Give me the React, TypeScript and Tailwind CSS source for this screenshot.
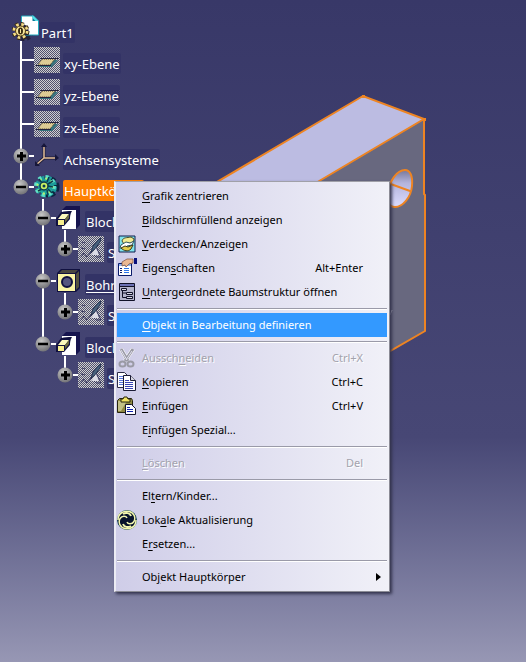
import React from "react";

interface TreeNode {
    label: string;
    icon: React.ReactNode;
    toggle?: "plus" | "minus";
    selected?: boolean;
    underlined?: boolean;
    children?: TreeNode[];
}

interface IMenuEntry {
    before: string;
    hotkey?: string;
    after?: string;
    shortcut?: string;
    icon?: React.ReactNode;
    state?: "active" | "disabled";
    submenu?: boolean;
}

/* Tree icons */

function PartIcon() {
    return (
        <svg viewBox="0 0 27 28" className="-mt-0.5 h-7 w-7">
            <circle cx="12" cy="18" r="7" fill="#25213a" stroke="#25213a" strokeWidth="4" strokeDasharray="3 2.5" />
            <path d="M9 2h12l5 5v14H9z" fill="#fff" stroke="#25a9bd" />
            <path d="M20 1v6h6z" fill="#0b7b96" />
            <path d="M20 1l6 6h-3l-3-3z" fill="#4fe0ea" />
            <path d="M10 10c5 1 7 5 6 11h-6z" fill="#25213a" />
            <circle cx="8" cy="17" r="7" fill="none" stroke="#3a2c12" strokeWidth="4" strokeDasharray="3 2.5" />
            <circle cx="8" cy="17" r="6.5" fill="none" stroke="#f3dc8a" strokeWidth="3" strokeDasharray="2.6 2.5" />
            <circle cx="8" cy="17" r="5" fill="#f6e49a" stroke="#5a4310" />
            <ellipse cx="8" cy="17" rx="2.5" ry="3.5" fill="#3a2c12" />
            <path d="M8 15v4" stroke="#f6e49a" />
        </svg>
    );
}

function Dither({ id }: { id: string }) {
    return (
        <>
            <defs>
                <pattern id={id} width="2" height="2" patternUnits="userSpaceOnUse">
                    <rect width="2" height="2" fill="#50506e" />
                    <path d="M0 0h1v1H0zM1 1h1v1H1z" fill="#cfcfcf" />
                </pattern>
            </defs>
            <rect width="26" height="26" fill={`url(#${id})`} shapeRendering="crispEdges" />
        </>
    );
}

function PlaneIcon() {
    return (
        <svg viewBox="0 0 26 26" className="size-[26px]">
            <Dither id="plane" />
            <path d="M11 13h13l-6 7H5z" fill="#35727c" />
            <path d="M8 12h13l-5 6H4z" fill="#dccb94" stroke="#3b3420" strokeDasharray="1 1" />
            <path d="M6 11.5h19M2 18.5h15" stroke="#22223c" />
        </svg>
    );
}

function AxisIcon() {
    return (
        <svg viewBox="0 0 26 26" className="size-[26px]">
            <path d="M10 2v13h13M10 15l-8 7" fill="none" stroke="#1d1d38" strokeWidth="3" />
            <path d="M10 3v12h12M10 15l-7 6" fill="none" stroke="#e3bd97" strokeWidth="1.5" />
            <path d="M7 4l3-4 3 4zM21 11l4 4-4 3zM1 18v5h5z" fill="#16163a" />
        </svg>
    );
}

function BodyIcon() {
    return (
        <svg viewBox="0 0 26 26" className="size-[26px]">
            <circle cx="15" cy="13" r="8" fill="#0d2440" stroke="#0d2440" strokeWidth="5" strokeDasharray="4 2.6" />
            <circle cx="12" cy="12.5" r="8" fill="#22a79b" stroke="#1b9a9a" strokeWidth="6" strokeDasharray="4.5 1.8" />
            <circle cx="11" cy="12" r="9" fill="none" stroke="#5fe0c8" strokeWidth="4" strokeDasharray="3 4.1" />
            <circle cx="11" cy="12" r="7.5" fill="none" stroke="#b4f26a" strokeWidth="2" strokeDasharray="2 3.9" />
            <path d="M5 5l3 4M15 3l-2 5M4 17l4-2M14 21l-1-5M19 13l-5-1M19 7l-5 3M18 19l-4-4" stroke="#0c3b50" strokeWidth="1.5" />
            <circle cx="10" cy="12" r="4" fill="#c8f062" stroke="#0c3b50" strokeWidth="1.5" />
            <circle cx="10" cy="12" r="1.5" fill="#0c3b50" />
        </svg>
    );
}

function PadIcon() {
    return (
        <svg viewBox="0 0 26 26" className="size-[26px]">
            <path d="M6 5l4-4h14v19l-4 4z" fill="#16144f" />
            <path d="M6 5h14v19H6z" fill="#fff" />
            <path d="M0 14l5-7h1c2-1 6-1 10-1-2 3-2 6-2 8l-6 7H0z" fill="#111140" />
            <path d="M6 9h7l-4 5H2z" fill="#fcf9bd" />
            <path d="M2 15h6v5H2z" fill="#f8f08f" />
            <path d="M13 9v4l-4 5v-4z" fill="#6b6940" />
        </svg>
    );
}

function HoleIcon() {
    return (
        <svg viewBox="0 0 26 26" className="size-[26px]">
            <path d="M1 5l4-4h19v19l-4 4H1z" fill="#111140" />
            <path d="M6 2h16l-3 3H3z" fill="#4a4740" />
            <path d="M20 6l3-3v16l-3 3z" fill="#55523e" />
            <path d="M2 6h17v17H2z" fill="#fbf5a4" />
            <circle cx="11" cy="14" r="5" fill="#55557f" stroke="#111140" strokeWidth="2" />
        </svg>
    );
}

function SketchIcon() {
    return (
        <svg viewBox="0 0 26 26" className="size-[26px]">
            <Dither id="sketch" />
            <path d="M3 21l3-4 3 4 4-5 5 5h5l-5-10" fill="none" stroke="#34345e" />
            <path d="M4 6l3 1M3 12l4 1" stroke="#34345e" />
            <path d="M13 16l2-6 6-7 2-1-1 4-5 7z" fill="#47617c" stroke="#23304e" />
            <path d="M18 12l3 7h-8l3-4z" fill="#dcdce6" />
        </svg>
    );
}

/* Menu icons */

function HideShowIcon() {
    return (
        <svg viewBox="0 0 20 20" className="size-5">
            <path d="M2 2h16v16H2z" fill="#7fe3ec" stroke="#101d4c" />
            <path d="M5 7c1-4 5-3 9-4l3 2c0 3-3 5-6 4l-4 1z" fill="#f3ec92" stroke="#4c4c2a" />
            <path d="M4 11l5-3 4 1 4-2-2 4-5 1-3 3-4-1z" fill="#fff" stroke="#31565e" />
            <path d="M4 14l4-2 3 1 5-2-2 4c-3 3-7 2-10-1z" fill="#e2cc4b" stroke="#3c3616" />
        </svg>
    );
}

function PropertiesIcon() {
    return (
        <svg viewBox="0 0 20 20" className="size-5">
            <path d="M1.5 5.5h13v12h-13z" fill="#fff" stroke="#0b1c6b" />
            <path d="M2 6h12v2H2z" fill="#8fb2f0" />
            <path d="M3 10.5h2M3 12.5h2M3 14.5h2" stroke="#0b1c6b" />
            <path d="M7 10.5h5M7 12.5h5M7 14.5h5" stroke="#2c74e8" />
            <path d="M5 4l5-3h6v4l-4 1-3 3-1-2-3 1z" fill="#eab893" stroke="#7a4a38" strokeWidth=".7" />
            <path d="M17 0h3v6h-3z" fill="#09107b" />
        </svg>
    );
}

function SubtreeIcon() {
    return (
        <svg viewBox="0 0 20 20" className="size-5">
            <path d="M2.5 1.5h15v17h-15z" fill="#b4b4cc" stroke="#111128" />
            <path d="M3 2h14v2H3z" fill="#6c71b5" />
            <path d="M2 4.500h16" stroke="#111128" />
            <path d="M5.500 7v8.500H9M5.500 11H9" fill="none" stroke="#111128" />
            <path d="M4.500 6.500h5v2h-5zM9.500 10.500h6v2h-6zM9.500 14.500h6v2h-6z" fill="#d8d8e6" stroke="#111128" />
        </svg>
    );
}

function CutIcon() {
    return (
        <svg viewBox="0 0 20 20" className="size-5">
            <path d="M4 1l7 12M16 1L8 13" stroke="#fff" strokeWidth="4" />
            <path d="M4 1l7 12M16 1L8 13" stroke="#9a9aa5" strokeWidth="3" />
            <path d="M4 2l6 10M15 3L9 12" stroke="#e2e1f0" />
            <ellipse cx="5.5" cy="16" rx="3" ry="2.5" fill="none" stroke="#9a9aa5" strokeWidth="2" />
            <ellipse cx="13.5" cy="16" rx="3" ry="2.5" fill="none" stroke="#9a9aa5" strokeWidth="2" />
        </svg>
    );
}

function CopyIcon() {
    return (
        <svg viewBox="0 0 20 20" className="size-5">
            <path d="M.5 .5h7l3 3v12h-10z" fill="#fff" stroke="#2b2b45" />
            <path d="M2 4.500h4M2 6.500h6M2 8.500h6M2 10.500h6M2 12.500h6" stroke="#5a76dc" />
            <path d="M6.500 3.500h7l5 5v10h-12z" fill="#fff" stroke="#1b1b35" />
            <path d="M13.500 3.500v5h5" fill="#d7d7e2" stroke="#1b1b35" />
            <path d="M8 8.500h4M8 10.500h8M8 12.500h8M8 14.500h8M8 16.500h8" stroke="#3a45b4" />
        </svg>
    );
}

function PasteIcon() {
    return (
        <svg viewBox="0 0 20 20" className="size-5">
            <path d="M.5 4.500l2-2h12l1 2v11l-2 1h-13z" fill="#8f8a43" stroke="#26240e" />
            <path d="M1 5h9L4 15H1z" fill="#c2bf86" />
            <path d="M4 3h2l1-2h3l1 2h2v3H4z" fill="#f1e363" stroke="#26240e" />
            <path d="M8.500 8.500h6l4 4v6h-10z" fill="#fff" stroke="#15152c" />
            <path d="M10 11.500h3M10 13.500h6M10 15.500h6" stroke="#1122ae" />
        </svg>
    );
}

function UpdateIcon() {
    return (
        <svg viewBox="0 0 20 20" className="size-5">
            <circle cx="10" cy="10" r="10" fill="#1d5c74" />
            <circle cx="10" cy="10" r="9.5" fill="#07132c" />
            <path d="M1 10C1 3 7 .5 12 1.500c5 1 7 6 5 10-2 3-6 3-7 .5" fill="none" stroke="#f2f6ae" strokeWidth="1.500" />
            <path d="M19 10c0 7-6 9.500-11 8.500-5-1-7-6-5-10 2-3 6-3 7-.5" fill="none" stroke="#f2f6ae" strokeWidth="1.500" />
            <path d="M6 4c3-2 7-1 8 2M14 16c-3 2-7 1-8-2" fill="none" stroke="#f2f6ae" strokeWidth="2" />
        </svg>
    );
}

const tree: TreeNode[] = [
    { label: "xy-Ebene", icon: <PlaneIcon /> },
    { label: "yz-Ebene", icon: <PlaneIcon /> },
    { label: "zx-Ebene", icon: <PlaneIcon /> },
    { label: "Achsensysteme", icon: <AxisIcon />, toggle: "plus" },
    {
        label: "Hauptkörper",
        icon: <BodyIcon />,
        toggle: "minus",
        selected: true,
        children: [
            {
                label: "Block.1",
                icon: <PadIcon />,
                toggle: "minus",
                children: [{ label: "Sk.1", icon: <SketchIcon />, toggle: "plus" }],
            },
            {
                label: "Bohrung",
                icon: <HoleIcon />,
                toggle: "minus",
                underlined: true,
                children: [{ label: "Sk.2", icon: <SketchIcon />, toggle: "plus" }],
            },
            {
                label: "Block.2",
                icon: <PadIcon />,
                toggle: "minus",
                children: [{ label: "Sk.3", icon: <SketchIcon />, toggle: "plus" }],
            },
        ],
    },
];

const menu: IMenuEntry[][] = [
    [
        { before: "", hotkey: "G", after: "rafik zentrieren" },
        { before: "", hotkey: "B", after: "ildschirmfüllend anzeigen" },
        { before: "", hotkey: "V", after: "erdecken/Anzeigen", icon: <HideShowIcon /> },
        { before: "Eigen", hotkey: "s", after: "chaften", shortcut: "Alt+Enter", icon: <PropertiesIcon /> },
        { before: "", hotkey: "U", after: "ntergeordnete Baumstruktur öffnen", icon: <SubtreeIcon /> },
    ],
    [{ before: "", hotkey: "O", after: "bjekt in Bearbeitung definieren", state: "active" }],
    [
        { before: "Aussch", hotkey: "n", after: "eiden", shortcut: "Ctrl+X", icon: <CutIcon />, state: "disabled" },
        { before: "", hotkey: "K", after: "opieren", shortcut: "Ctrl+C", icon: <CopyIcon /> },
        { before: "", hotkey: "E", after: "infügen", shortcut: "Ctrl+V", icon: <PasteIcon /> },
        { before: "E", hotkey: "i", after: "nfügen Spezial..." },
    ],
    [{ before: "", hotkey: "L", after: "öschen", shortcut: "Del", state: "disabled" }],
    [
        { before: "El", hotkey: "t", after: "ern/Kinder..." },
        { before: "Lok", hotkey: "a", after: "le Aktualisierung", icon: <UpdateIcon /> },
        { before: "E", hotkey: "r", after: "setzen..." },
    ],
    [{ before: "Ob", hotkey: "j", after: "ekt Hauptkörper", submenu: true }],
];

function Toggle({ kind }: { kind: "plus" | "minus" }) {
    return (
        <button
            aria-label={kind === "plus" ? "Aufklappen" : "Zuklappen"}
            className="relative mt-[5px] block size-4 shrink-0"
        >
            <svg viewBox="0 0 16 16" className="size-4">
                <defs>
                    <radialGradient id="ball" cx=".4" cy=".3" r=".7">
                        <stop offset="0" stopColor="#c6c6c6" />
                        <stop offset="1" stopColor="#747478" />
                    </radialGradient>
                </defs>
                <circle cx="8" cy="8" r="7.5" fill="url(#ball)" />
                <path
                    d={kind === "plus" ? "M4 8h9M8.5 4v9" : "M3 8h10"}
                    stroke="#000"
                    strokeWidth={kind === "plus" ? 3 : 2.5}
                />
            </svg>
        </button>
    );
}

function TreeItem({ node, last }: { node: TreeNode; last: boolean }) {
    // planes and the sketch leaves sit one pixel looser than the branches
    const loose = !node.toggle || (last && !node.children);

    return (
        <li className="relative">
            <span
                className={`absolute -top-1.5 left-[7px] w-0.5 bg-white ${last ? "h-5" : "bottom-0"}`}
            />
            <div className={`flex items-start ${loose ? "h-8" : "h-[31px]"}`}>
                {node.toggle ? <Toggle kind={node.toggle} /> : <span className="w-2 shrink-0" />}
                <span className={`mt-3 h-0.5 shrink-0 bg-white ${node.toggle ? "w-[5px]" : "w-[13px]"}`} />
                <span className="relative w-[29px] shrink-0">{node.icon}</span>
                <span
                    className={`mt-1.5 h-[21px] rounded-xs px-px leading-[22px] ${
                        node.selected ? "bg-[#ff8000]" : "bg-[#333366]"
                    } ${node.underlined ? "underline underline-offset-2" : ""}`}
                >
                    {node.label}
                </span>
            </div>
            {node.children && (
                <ul className="pl-[22px]">
                    {node.children.map((child, i) => (
                        <TreeItem
                            key={child.label}
                            node={child}
                            last={i === node.children!.length - 1}
                        />
                    ))}
                </ul>
            )}
        </li>
    );
}

function MenuItem(props: IMenuEntry) {
    let color = "text-black";
    if (props.state === "active") color = "bg-[#3399ff] text-white";
    if (props.state === "disabled") color = "text-[#a3a3ad] [text-shadow:1px_1px_0_#fff]";

    return (
        <button
            role="menuitem"
            disabled={props.state === "disabled"}
            className={`flex h-6 w-full items-center text-left ${color}`}
        >
            <span className="w-[25px] shrink-0">{props.icon}</span>
            <span className="grow whitespace-nowrap">
                {props.before}
                <u className="underline-offset-2">{props.hotkey}</u>
                {props.after}
            </span>
            <span className="pr-6">{props.shortcut}</span>
            {props.submenu && (
                <svg viewBox="0 0 5 8" className="mr-1.5 h-2 w-[5px]">
                    <path d="M0 0l5 4-5 4z" fill="#000" />
                </svg>
            )}
        </button>
    );
}

function Model() {
    return (
        <svg viewBox="0 0 240 280" className="absolute left-[200px] top-20 h-[280px] w-60">
            <defs>
                <linearGradient id="bore" x1="0" y1="0" x2="0" y2="1">
                    <stop offset="0" stopColor="#77779a" />
                    <stop offset=".35" stopColor="#b4b4dc" />
                    <stop offset="1" stopColor="#dcdcff" />
                </linearGradient>
            </defs>
            <path d="M0 112L163 16l61 23L60 136z" fill="#bcbce2" />
            <path d="M224 39L60 136v210l165-95z" fill="#68687f" />
            <path d="M205 90c5 0 8 6 7 16-1 11-9 21-17 21-6 0-8-5-7-13 1-13 9-24 17-24z" fill="url(#bore)" />
            <g fill="none" stroke="#ee8422" strokeWidth="2">
                <path d="M0 112L163 16l61 23L60 136" />
                <path d="M224 39v75l1 1v136L60 346" />
                <path d="M205 90c5 0 8 6 7 16-1 11-9 21-17 21-6 0-8-5-7-13 1-13 9-24 17-24zM188 103l22 8" />
            </g>
            <path d="M162 15h3v3h-3zM222 38h4v3h-4z" fill="#ee8422" />
            <path d="M192 230l-2 5" stroke="#c8c8d4" />
        </svg>
    );
}

export default function App() {
    return (
        <div className="relative min-h-screen overflow-hidden bg-linear-to-b from-[#383868] via-[#474775] via-66% to-[#9797b4] font-['Noto_Sans',sans-serif]">
            <Model />

            <nav className="relative w-44 pl-[13px] pt-4 text-[13px] whitespace-nowrap text-white">
                <div className="-ml-px flex h-[31px] items-start">
                    <span className="relative z-10 w-[28px] shrink-0">
                        <PartIcon />
                    </span>
                    <span className="mt-1.5 h-[21px] rounded-xs bg-[#333366] px-px leading-[22px]">Part1</span>
                </div>
                <ul>
                    {tree.map((node, i) => (
                        <TreeItem key={node.label} node={node} last={i === tree.length - 1} />
                    ))}
                </ul>
            </nav>

            {/* Context menu */}
            <div
                role="menu"
                className="absolute left-[114px] top-[181px] w-[276px] border border-l-2 border-t-[#a0a0a8] border-r-[#8c8c96] border-b-[#8c8c96] border-l-[#ececf4] bg-linear-to-r from-[#cfcde8] to-[#f1f1f8] py-0.5 pr-0.5 pl-px text-[11px] shadow-[2px_2px_3px_#33334c]"
            >
                {menu.map((group, i) => (
                    <div key={i} className={i > 0 ? "mt-1 border-t border-[#9a9aa8] pt-1 shadow-[inset_0_1px_0_#fff]" : ""}>
                        {group.map((entry) => (
                            <MenuItem key={entry.before + entry.after} {...entry} />
                        ))}
                    </div>
                ))}
            </div>
        </div>
    );
}
